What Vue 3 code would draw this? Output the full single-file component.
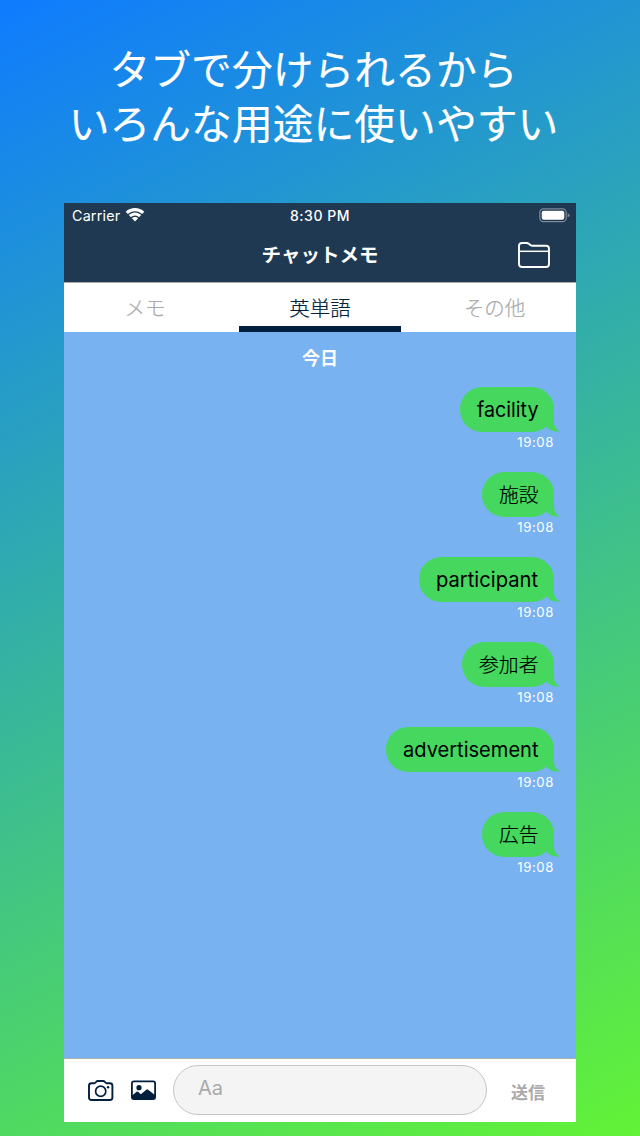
<script setup>
const tabs = [
  { label: 'メモ', active: false },
  { label: '英単語', active: true },
  { label: 'その他', active: false },
]
const messages = [
  { text: 'facility', latin: true, width: 94, ink: 61.5 },
  { text: '施設', latin: false, width: 72, ink: 39.5 },
  { text: 'participant', latin: true, width: 135, ink: 102 },
  { text: '参加者', latin: false, width: 92, ink: 59.5 },
  { text: 'advertisement', latin: true, width: 168, ink: 135.5 },
  { text: '広告', latin: false, width: 72, ink: 39.5 },
]
</script>

<template>
  <main class="page">
    <h1 class="headline">タブで分けられるから<br />いろんな用途に使いやすい</h1>
    <section class="phone">
      <header class="top">
        <div class="status">
          <div class="carrier">
            <span>Carrier</span>
            <svg class="wifi" width="20" height="14" viewBox="0 0 20 14" fill="#fff">
              <path d="M10 0C6.500 0 3.300 1.300 .7 3.700L2.900 6.100C4.800 4.200 7.200 3.200 10 3.200S15.200 4.200 17.100 6.100L19.300 3.700C16.700 1.300 13.500 0 10 0Z" />
              <path d="M10 4.500C7.700 4.500 5.600 5.400 3.800 7L6 9.300C7.100 8.200 8.400 7.500 10 7.500S12.900 8.200 14 9.300L16.200 7C14.400 5.400 12.300 4.500 10 4.500Z" />
              <path d="M10 8.900C8.800 8.900 7.700 9.400 6.900 10.200L10 13.500L13.100 10.200C12.300 9.400 11.200 8.900 10 8.900Z" />
            </svg>
          </div>
          <div class="clock"><span>8:30 PM</span></div>
          <div class="battery">
            <svg width="31" height="15" viewBox="0 0 31 15">
              <rect x=".8" y=".8" width="26.400" height="12.900" rx="3.700" fill="none" stroke="#7d8a9a" stroke-width="1.200" />
              <rect x="2.700" y="2.700" width="22.600" height="9.100" rx="2" fill="#fff" />
              <path d="M28.700 5.200Q30.500 5.800 30.500 7.200T28.700 9.200Z" fill="#7d8a9a" />
            </svg>
          </div>
        </div>
        <div class="nav">
          <h2>チャットメモ</h2>
          <svg class="folder" width="32" height="26" viewBox="0 0 32 26" fill="none" stroke="#fff" stroke-width="1.900">
            <path d="M1 9V4Q1 1 4 1H8.700Q10 1 11.100 1.900L12.300 2.900Q13.300 3.700 14.700 3.700H28Q31 3.700 31 6.700V22Q31 25 28 25H4Q1 25 1 22Z" />
            <path d="M1 9.300H31" stroke-width="1.500" />
          </svg>
        </div>
      </header>
      <nav class="tabs">
        <div v-for="tab in tabs" :key="tab.label" class="tab" :class="{ active: tab.active }">
          <span>{{ tab.label }}</span>
        </div>
      </nav>
      <div class="chat">
        <div class="day">今日</div>
        <div v-for="m in messages" :key="m.text" class="message">
          <div class="bubble" :style="{ width: m.width + 'px' }">
            <svg class="label" :width="m.ink + 2" height="30">
              <text x="0" y="22" :textLength="m.ink" lengthAdjust="spacingAndGlyphs" :class="m.latin ? 'latin' : 'kanji'">{{ m.text }}</text>
            </svg>
            <svg class="tail" width="15" height="18" viewBox="0 0 15 18">
              <path d="M8 0V7C8 12 9.500 15.500 14.500 17.300C9 18.200 4.500 17 .5 13L2 0Z" fill="#46d85e" />
            </svg>
          </div>
          <time>19:08</time>
        </div>
      </div>
      <footer class="composer">
        <svg class="camera" width="26" height="22" viewBox="0 0 26 22" fill="none" stroke="#001f3f" stroke-width="1.900">
          <path d="M3.500 3.200H6.300Q7 3.200 7.600 2.500L8.200 1.800Q8.800 1 9.900 1H15.100Q16.200 1 16.800 1.800L17.400 2.500Q18 3.200 18.700 3.200H21.900Q24.400 3.200 24.400 5.700V17.500Q24.400 20 21.900 20H3.500Q1 20 1 17.500V5.700Q1 3.200 3.500 3.200Z" />
          <circle cx="12.700" cy="11.200" r="5.100" stroke-width="1.700" />
          <circle cx="20.100" cy="7.300" r="1.200" fill="#001f3f" stroke="none" />
        </svg>
        <svg class="photo" width="25" height="21" viewBox="0 0 25 21">
          <rect x=".9" y="1.400" width="23.200" height="17.700" rx="2" fill="#fff" stroke="#001f3f" stroke-width="1.800" />
          <circle cx="8" cy="7.700" r="2.600" fill="#001f3f" />
          <path d="M1 15.600L5.700 11.800Q6.600 11.200 7.400 12L9.800 14.200L15.300 9.700Q16.200 9 17.100 9.700L24 15V19H1Z" fill="#001f3f" />
        </svg>
        <div class="field"><span>Aa</span></div>
        <div class="send">送信</div>
      </footer>
    </section>
  </main>
</template>

<style>
body {
  margin: 0;
}
</style>

<style scoped>
.page {
  width: 640px;
  height: 1136px;
  box-sizing: border-box;
  padding-top: 41px;
  overflow: hidden;
  background: linear-gradient(154deg, #0f7bff, #62f336);
  font-family: Inter, 'Noto Sans CJK JP', sans-serif;
}
.headline {
  margin: 0;
  height: 162px;
  padding-right: 13px;
  text-align: center;
  color: #fff;
  font: 400 40.800px/54px 'Noto Sans CJK JP', sans-serif;
  -webkit-text-stroke: 0.150px #fff;
  white-space: nowrap;
}
.phone {
  width: 512px;
  height: 919px;
  margin: 0 auto;
  display: flex;
  flex-direction: column;
  background: #fff;
}
.top {
  height: 79px;
  background: #203952;
  border-bottom: 1px solid #aaa;
  color: #fff;
}
.status {
  height: 25px;
  display: grid;
  grid-template-columns: 1fr 1fr 1fr;
  align-items: center;
  font-size: 14.300px;
  line-height: 25px;
}
.carrier {
  display: flex;
  align-items: center;
  gap: 5px;
  padding-left: 8px;
  letter-spacing: 0.200px;
}
.wifi {
  margin-top: -1px;
}
.clock {
  text-align: center;
  font-weight: 500;
  font-size: 14px;
  letter-spacing: 0.500px;
}
.battery {
  display: flex;
  justify-content: flex-end;
  padding-right: 6px;
}
.nav {
  height: 54px;
  display: grid;
  grid-template-columns: 1fr auto 1fr;
  align-items: center;
}
.nav h2 {
  grid-column: 2;
  margin: -2px 0 0;
  font: 700 19.500px/28px 'Noto Sans CJK JP', sans-serif;
}
.folder {
  justify-self: end;
  margin-right: 26px;
}
.tabs {
  height: 49px;
  display: grid;
  grid-template-columns: 162px 162px 162px;
  grid-template-rows: 49px;
  column-gap: 13px;
}
.tab {
  box-sizing: border-box;
  height: 49px;
  border-bottom: 6px solid transparent;
  color: #aaa;
  text-align: center;
  font: 300 20.500px/48px 'Noto Sans CJK JP', sans-serif;
  -webkit-text-stroke: 0.200px currentColor;
}
.tab:last-child {
  padding-right: 1px;
}
.tab.active {
  color: #001f3f;
  border-bottom-color: #001f3f;
}
.chat {
  flex: 1;
  display: flex;
  flex-direction: column;
  align-items: flex-end;
  background: #78b2f1;
}
.day {
  align-self: stretch;
  height: 55px;
  text-align: center;
  color: #fff;
  font: 700 18px/50px 'Noto Sans CJK JP', sans-serif;
}
.message {
  height: 85px;
  margin-right: 22px;
  display: flex;
  flex-direction: column;
  align-items: flex-end;
}
.bubble {
  position: relative;
  height: 45px;
  border-radius: 22px;
  background: #46d85e;
  display: flex;
  align-items: center;
  padding-left: 17px;
  box-sizing: border-box;
}
.label {
  overflow: visible;
}
.latin {
  font: 400 20.500px Inter, sans-serif;
}
.kanji {
  font: 300 19.500px 'Noto Sans CJK JP', sans-serif;
  stroke: #000;
  stroke-width: 0.200px;
}
.tail {
  position: absolute;
  right: -7px;
  bottom: 0;
}
time {
  color: #fff;
  font-size: 13.200px;
  line-height: 21px;
  letter-spacing: 0.600px;
}
.composer {
  height: 64px;
  box-sizing: border-box;
  border-top: 1px solid #b0b0b0;
  display: flex;
  align-items: center;
  background: #fff;
}
.camera {
  margin-left: 24px;
}
.photo {
  margin-left: 17px;
}
.field {
  width: 314px;
  height: 50px;
  margin: 0 0 2px 17px;
  box-sizing: border-box;
  border: 1px solid #c5c5c5;
  border-radius: 25px;
  background: #f4f4f4;
  color: #aaa;
  padding-left: 24px;
  font-size: 20px;
  line-height: 45px;
}
.send {
  margin-left: 24px;
  color: #aaa;
  font: 700 17px/24px 'Noto Sans CJK JP', sans-serif;
  padding-top: 2px;
}
</style>
